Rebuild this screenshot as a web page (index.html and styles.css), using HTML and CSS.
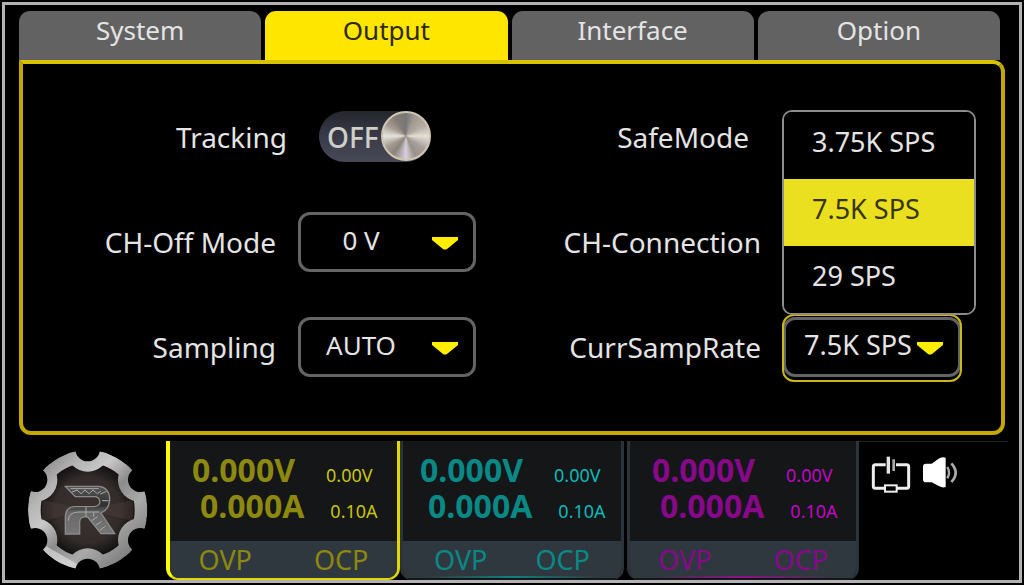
FILE: index.html
```html
<!DOCTYPE html>
<html lang="en">
<head>
<meta charset="utf-8">
<title>Output</title>
<link rel="stylesheet" href="styles.css">
</head>
<body>
<main class="screen">
  <nav class="tabs" role="tablist">
    <button class="tab" role="tab">System</button>
    <button class="tab tab-active" role="tab" aria-selected="true">Output</button>
    <button class="tab" role="tab">Interface</button>
    <button class="tab" role="tab">Option</button>
  </nav>

  <section class="panel">
    <label class="name name-track" for="tracking">Tracking</label>
    <div class="switch">
      <input class="switch-track" type="checkbox" id="tracking">
      <span class="switch-text">OFF</span>
      <span class="switch-knob"></span>
    </div>
    <span class="name name-safe">SafeMode</span>
    <div></div>

    <label class="name" for="off-mode">CH-Off Mode</label>
    <div class="picker">
      <select class="select" id="off-mode"><option>0 V</option></select>
      <svg class="arrow" viewBox="0 0 26 13"><path d="M0 0H26V3L15 12Q13 13 11 12L0 3Z"/></svg>
    </div>
    <span class="name">CH-Connection</span>
    <div></div>

    <label class="name" for="sampling">Sampling</label>
    <div class="picker">
      <select class="select" id="sampling"><option>AUTO</option></select>
      <svg class="arrow" viewBox="0 0 26 13"><path d="M0 0H26V3L15 12Q13 13 11 12L0 3Z"/></svg>
    </div>
    <label class="name" for="rate">CurrSampRate</label>
    <div class="picker picker-focus">
      <select class="select select-wide" id="rate"><option>7.5K SPS</option></select>
      <svg class="arrow" viewBox="0 0 26 13"><path d="M0 0H26V3L15 12Q13 13 11 12L0 3Z"/></svg>
      <div class="menu" role="listbox">
        <button class="choice" role="option">3.75K SPS</button>
        <button class="choice choice-active" role="option" aria-selected="true">7.5K SPS</button>
        <button class="choice" role="option">29 SPS</button>
      </div>
    </div>
  </section>

  <footer class="status">
    <svg class="logo" viewBox="80 70 366 372">
      <defs>
        <linearGradient id="metal" gradientUnits="userSpaceOnUse" x1="110" y1="90" x2="420" y2="420">
          <stop offset="0" stop-color="#7c7c7c"/><stop offset=".22" stop-color="#b4b4b4"/>
          <stop offset=".36" stop-color="#c8c8c8"/><stop offset=".52" stop-color="#8c8c8c"/>
          <stop offset=".68" stop-color="#aaa"/><stop offset="1" stop-color="#6c6c6c"/>
        </linearGradient>
        <linearGradient id="shine" gradientUnits="userSpaceOnUse" x1="190" y1="430" x2="300" y2="260">
          <stop offset="0" stop-color="#fff" stop-opacity=".5"/><stop offset="1" stop-color="#fff" stop-opacity="0"/>
        </linearGradient>
        <radialGradient id="core">
          <stop offset="0" stop-color="#3c3230"/><stop offset=".65" stop-color="#332c2b"/><stop offset="1" stop-color="#0c0c0c"/>
        </radialGradient>
        <linearGradient id="emblem" x1="0" y1="0" x2="0" y2="1">
          <stop offset="0" stop-color="#555"/><stop offset=".4" stop-color="#303030"/>
          <stop offset=".55" stop-color="#686868"/><stop offset="1" stop-color="#777"/>
        </linearGradient>
        <clipPath id="disc"><circle cx="262" cy="256" r="179"/></clipPath>
      </defs>
      <circle cx="262" cy="256" r="150" fill="url(#core)"/>
      <path d="M262 256 125 225V290ZM262 256 399 225V290Z" fill="#50403c" opacity=".4"/>
      <g clip-path="url(#disc)">
        <circle cx="262" cy="256" r="160" fill="none" stroke="url(#metal)" stroke-width="38"/>
        <g fill="url(#metal)">
          <circle cx="262" cy="76" r="65"/><circle cx="418" cy="166" r="65"/><circle cx="418" cy="346" r="65"/>
          <circle cx="262" cy="436" r="65"/><circle cx="106" cy="346" r="65"/><circle cx="106" cy="166" r="65"/>
        </g>
        <path d="M262 436 105 346 120 420 220 450Z" fill="url(#shine)"/>
      </g>
      <g fill="#000">
        <circle cx="262" cy="73" r="37"/><circle cx="420" cy="165" r="37"/><circle cx="420" cy="347" r="37"/>
        <circle cx="262" cy="439" r="37"/><circle cx="104" cy="347" r="37"/><circle cx="104" cy="165" r="37"/>
      </g>
      <path d="M195 185H298Q328 190 328 225Q326 255 302 265L343 327H302L262 277Q238 274 238 292V328H195V274Q197 248 222 246H282Q300 244 298 229Q296 216 282 216H225Z" fill="url(#emblem)" stroke="#8b8b8b" stroke-width="4"/>
      <path d="M210 192H295M215 202 230 196 242 207 254 196 266 207 278 196 291 207 302 199M204 288Q204 262 236 262H296M257 247V276M280 264V276M274 288 292 276M286 302 304 290M298 317 316 304M300 208 319 200M305 228 325 228" fill="none" stroke="#aaa" stroke-width="3"/>
    </svg>

    <article class="channel channel-1">
      <div class="meter">
        <div class="reading"><strong class="value">0.000V</strong><span class="limit">0.00V</span></div>
        <div class="reading reading-amps"><strong class="value">0.000A</strong><span class="limit">0.10A</span></div>
      </div>
      <div class="guards"><span>OVP</span><span>OCP</span></div>
    </article>
    <article class="channel channel-2">
      <div class="meter">
        <div class="reading"><strong class="value">0.000V</strong><span class="limit">0.00V</span></div>
        <div class="reading reading-amps"><strong class="value">0.000A</strong><span class="limit">0.10A</span></div>
      </div>
      <div class="guards"><span>OVP</span><span>OCP</span></div>
    </article>
    <article class="channel channel-3">
      <div class="meter">
        <div class="reading"><strong class="value">0.000V</strong><span class="limit">0.00V</span></div>
        <div class="reading reading-amps"><strong class="value">0.000A</strong><span class="limit">0.10A</span></div>
      </div>
      <div class="guards"><span>OVP</span><span>OCP</span></div>
    </article>

    <div class="icons">
      <svg class="icon-link" viewBox="64 93 120 111">
        <path d="M108 119H77Q71 119 71 125V184Q71 190 77 190H104M142 190H171Q177 190 177 184V125Q177 119 171 119H139" fill="none" stroke="#eee" stroke-width="9"/>
        <path d="M116 95V146" stroke="#e4e4e4" stroke-width="10"/>
        <path d="M132 103V138" stroke="#aaa" stroke-width="8"/>
        <rect x="106" y="181" width="35" height="19" fill="#000" stroke="#eee" stroke-width="6"/>
      </svg>
      <svg class="icon-sound" viewBox="216 96 108 99">
        <path d="M219 126Q220 119 228 119H245L268 103Q278 98 287 101V189Q278 192 268 187L245 175H228Q219 174 219 167Z" fill="#fff"/>
        <path d="M292 129Q302 146 292 163" fill="none" stroke="#aaa" stroke-width="7"/>
        <path d="M304 118Q330 146 304 174" fill="none" stroke="#aaa" stroke-width="8"/>
      </svg>
    </div>
  </footer>
</main>
</body>
</html>
```
FILE: styles.css
```css
* { box-sizing: border-box; }

body {
  margin: 0;
  padding: 2px;
  height: 100vh;
  background: #000;
  color: #e4e4e4;
  font-family: "Noto Sans", "Open Sans", sans-serif;
  font-size: 26px;
}

button, select { font: inherit; color: inherit; }

.screen {
  display: flex;
  flex-direction: column;
  height: 100%;
  border: 3px solid #b4b2b4;
}

.tabs {
  display: grid;
  grid-template-columns: repeat(4, 1fr);
  gap: 4px;
  padding: 6px 19px 0 14px;
}

.tab {
  height: 49px;
  padding: 0 0 11px;
  border: 0;
  border-radius: 11px 11px 0 0;
  background: #626262;
  line-height: 38px;
}

.tab-active { background: #ffe600; color: #2e2a00; }

.panel {
  flex: 1;
  display: grid;
  grid-template-columns: 253px 1fr 253px 218px;
  grid-template-rows: repeat(3, 1fr);
  align-items: center;
  column-gap: 22px;
  margin: 0 14px;
  padding: 20px 0 32px;
  border: 4px solid #c4a800;
  border-top-color: #d8c200;
  border-radius: 0 12px 12px 12px;
}

.name { font-size: 28px; line-height: 38px; text-align: right; white-space: nowrap; }
.name-track { margin-right: -11px; }
.name-safe { padding-right: 12px; }

.switch {
  position: relative;
  width: 112px;
  height: 51px;
  margin-left: 21px;
}

.switch-track {
  appearance: none;
  display: block;
  width: 100%;
  height: 100%;
  margin: 0;
  border-radius: 26px;
  background: linear-gradient(#23262b, #393b49 50%, #484856);
}

.switch-text {
  position: absolute;
  top: 0;
  left: 8px;
  line-height: 52px;
  font-size: 28px;
  font-weight: 500;
  color: #d0cec8;
  pointer-events: none;
}

.switch-knob {
  position: absolute;
  top: 0;
  right: 0;
  width: 50px;
  height: 50px;
  border: 2px solid #cfc6b2;
  border-radius: 50%;
  background: conic-gradient(#777, #a09a92 25deg, #b5aca2 60deg, #e2dfd4 90deg, #a8a29c 125deg, #99908a 155deg, #d8d0dc 180deg, #8c8278 215deg, #a39b94 240deg, #e6e3dc 270deg, #a59c94 300deg, #857c74 330deg, #777);
  pointer-events: none;
}

.picker { position: relative; width: 178px; }

.select {
  appearance: none;
  display: block;
  width: 100%;
  height: 60px;
  padding: 0 52px 4px 0;
  border: 3px solid #646464;
  border-radius: 12px;
  background: #000;
  text-align: center;
  text-align-last: center;
  outline: 0;
}

.select-wide { padding-right: 28px; font-size: 27px; }

.arrow {
  position: absolute;
  top: 25px;
  right: 18px;
  width: 26px;
  height: 13px;
  fill: #ffee00;
  pointer-events: none;
}

.picker-focus::before {
  content: "";
  position: absolute;
  inset: -3px -1px -5px;
  border: 2px solid #c8b818;
  border-radius: 12px;
  pointer-events: none;
}

.menu {
  position: absolute;
  left: -1px;
  bottom: 100%;
  width: 194px;
  margin-bottom: 2px;
  overflow: hidden;
  border: 2px solid #8c8c8c;
  border-radius: 10px;
  background: #000;
  font-size: 27px;
}

.choice {
  display: block;
  width: 100%;
  height: 67px;
  padding: 0 0 7px 28px;
  border: 0;
  background: #000;
  text-align: left;
}

.choice-active { background: #ebe020; color: #38350c; }

.status {
  display: grid;
  grid-template-columns: 161fr 234fr 227fr 232fr 160fr;
  margin-top: 6px;
}

.logo { width: 122px; height: 124px; margin: 7px 0 0 22px; }

.channel {
  border: solid #2a343a;
  border-width: 0 3px;
  border-radius: 0 0 12px 12px;
  background: #141618;
  overflow: hidden;
}

.channel-1 {
  border-color: #e0d800;
  border-left-color: #ffff00;
  border-width: 0 3px 2px 4px;
  color: #8c8810;
}

.channel-2 { margin-right: 3px; color: #0a8886; }
.channel-3 { color: #88088a; }

.meter { padding: 11px 0 17px 22px; }

.channel-2 .meter { padding-left: 17px; }

.reading {
  display: flex;
  align-items: baseline;
  gap: 31px;
  height: 36px;
  line-height: 36px;
}

.reading-amps { gap: 26px; padding-left: 8px; }

.value { font-size: 32px; }
.limit { font-size: 18px; color: #c8c410; }
.channel-2 .limit { color: #10b8b8; }
.channel-3 .limit { color: #c008c4; }

.guards {
  display: flex;
  justify-content: center;
  gap: 62px;
  height: 37px;
  line-height: 37px;
  font-size: 27px;
  background: #2f383f;
}

.channel-2 .guards {
  gap: 48px;
  background: linear-gradient(90deg, #2f383f 10%, #108080 50%, #2f383f 90%) bottom / 100% 2px no-repeat #2f383f;
}

.channel-3 .guards {
  background: linear-gradient(90deg, #2f383f 10%, #90108c 50%, #2f383f 90%) bottom / 100% 2px no-repeat #2f383f;
}

.icons {
  display: flex;
  align-items: flex-start;
  gap: 11px;
  margin-right: 11px;
  padding: 14px 0 0 12px;
  border-top: 1px solid #1a2226;
}

.icon-link { width: 40px; height: 37px; }
.icon-sound { width: 36px; height: 33px; }
```
